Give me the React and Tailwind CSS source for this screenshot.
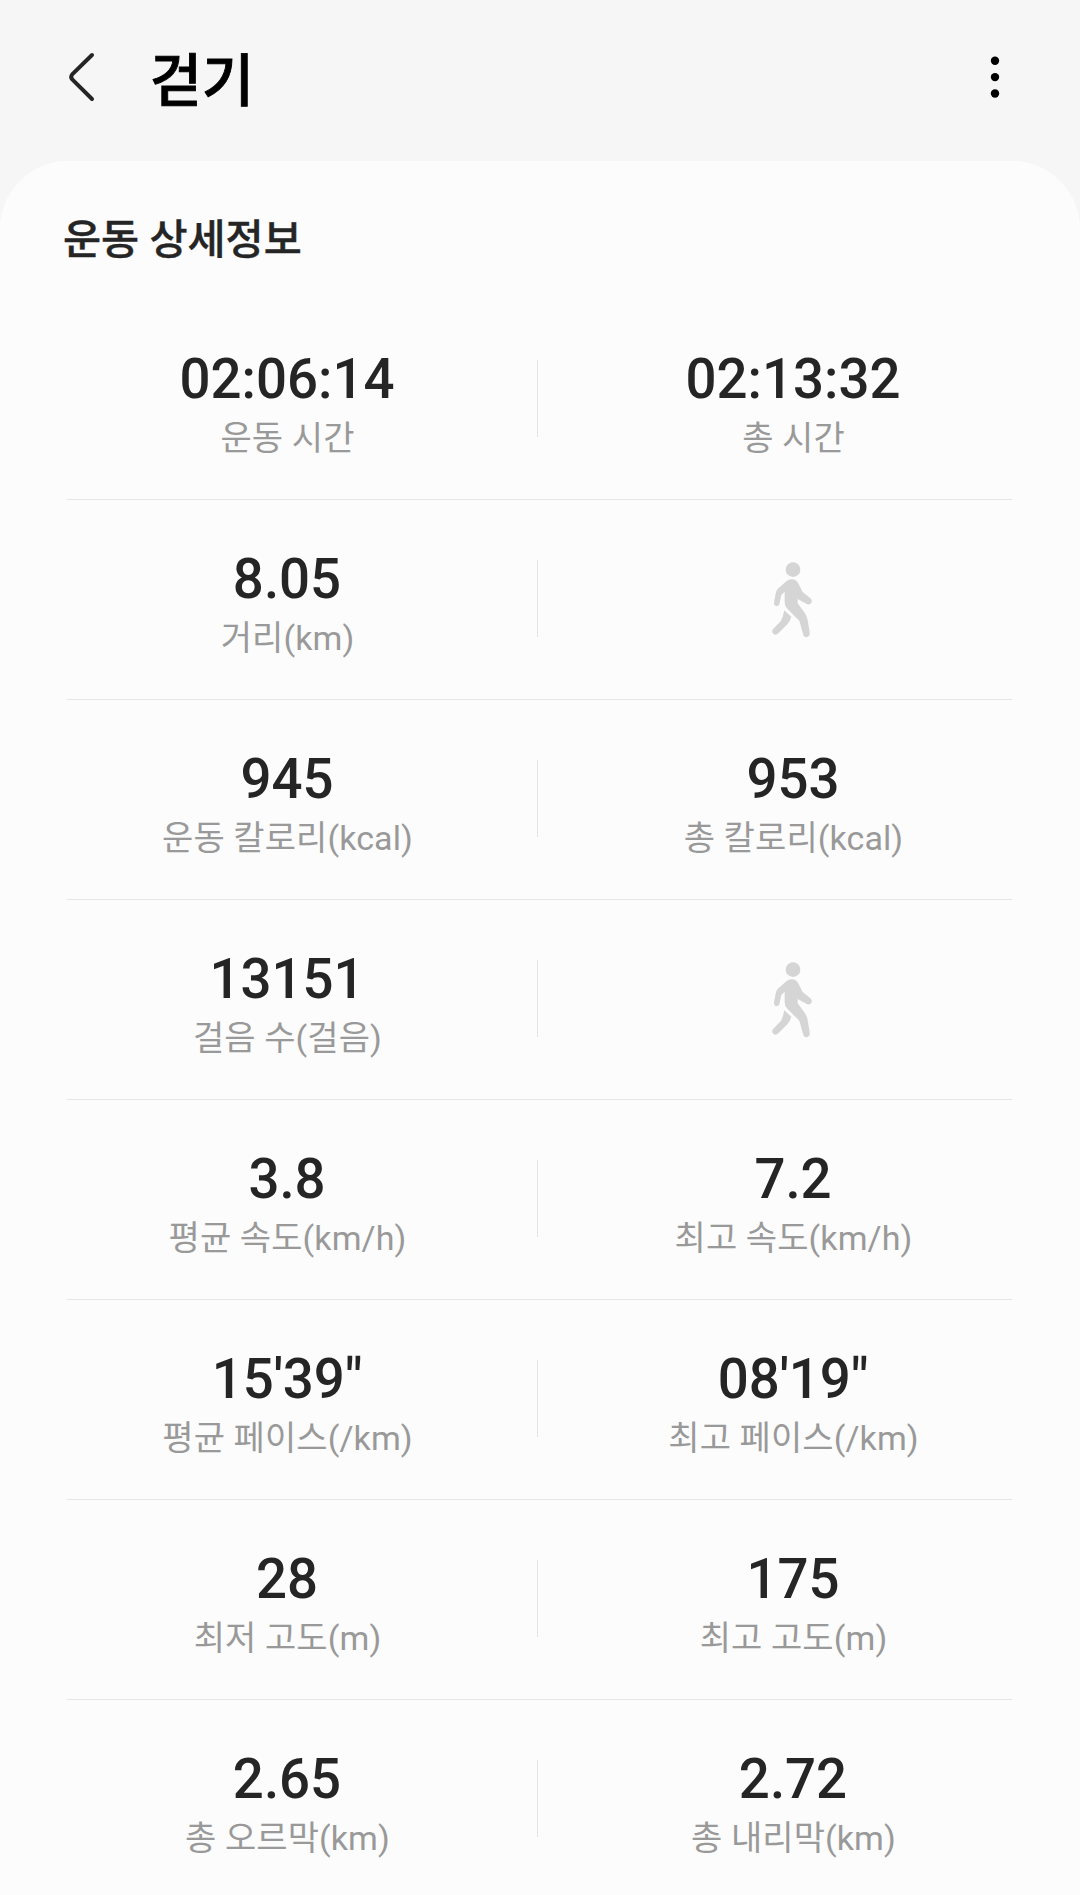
const rows = [
  [["02:06:14", "운동 시간"], ["02:13:32", "총 시간"]],
  [["8.05", "거리(km)"], null],
  [["945", "운동 칼로리(kcal)"], ["953", "총 칼로리(kcal)"]],
  [["13151", "걸음 수(걸음)"], null],
  [["3.8", "평균 속도(km/h)"], ["7.2", "최고 속도(km/h)"]],
  [["15'39\"", "평균 페이스(/km)"], ["08'19\"", "최고 페이스(/km)"]],
  [["28", "최저 고도(m)"], ["175", "최고 고도(m)"]],
  [["2.65", "총 오르막(km)"], ["2.72", "총 내리막(km)"]],
];

function WalkIcon() {
  return (
    <svg className="mt-[60px] mr-[1px] h-[80px] w-[44px]" viewBox="94 60 132 240" fill="#d5d5d5">
      <circle cx="160" cy="89" r="22" />
      <path d="M140 124 C150 115 167 116 174 127 L189 156 L212 175 C223 184 212 198 201 192 L174 177 L174 190 L196 220 Q202 229 204 240 L210 277 C213 294 192 297 190 281 L179 242 L143 206 Q134 197 135 184 L135 155 L125 165 L120 189 C117 203 101 201 103 187 L109 157 Q110 151 114 147 Z" />
      <path d="M134 211 L155 230 Q151 244 143 253 L116 280 C105 291 91 277 101 266 L123 244 Q130 232 134 211 Z" />
    </svg>
  );
}

function Stat({ data }) {
  return (
    <div className="flex flex-col items-center whitespace-nowrap">
      {data ? (
        <>
          <div className="mt-[47px] mr-[1px] h-[64px] text-[54.6px] leading-[64px] font-medium text-[#252525]">{data[0]}</div>
          <div className="mt-[7px] h-[40px] text-[34px] leading-[40px] tracking-[0.1px] text-[#999999]">{data[1]}</div>
        </>
      ) : (
        <WalkIcon />
      )}
    </div>
  );
}

export default function App() {
  return (
    <div className="h-[1895px] w-[1080px] overflow-hidden bg-[#f6f6f6] font-['Roboto','Noto_Sans_CJK_KR',sans-serif]">
      <header className="flex h-[161px] items-start pl-[64px] pr-[75.5px]">
        <svg className="mt-[47px] h-[60px] w-[36px]" viewBox="0 0 36 60" fill="none" stroke="#252525" strokeWidth="4" strokeLinecap="round" strokeLinejoin="round">
          <path d="M28 8 L8.2 27.4 Q6.2 30 8.2 32.4 L28 52" />
        </svg>
        <h1 className="mt-[42px] ml-[50px] text-[56.5px] leading-[80px] font-medium text-black [-webkit-text-stroke:0.9px_#000]">걷기</h1>
        <svg className="mt-[52px] ml-auto h-[50px] w-[20px]" viewBox="0 0 20 50">
          <circle cx="10" cy="8.7" r="4.2" />
          <circle cx="10" cy="25.1" r="4.2" />
          <circle cx="10" cy="41.5" r="4.2" />
        </svg>
      </header>
      <main className="h-[1734px] rounded-t-[68px] bg-[#fcfcfc]">
        <h2 className="h-[139px] pt-[49px] pl-[63px] text-[41.4px] leading-[60px] font-medium text-[#252525] [-webkit-text-stroke:0.4px_#252525]">운동 상세정보</h2>
        {rows.map((row, i) => (
          <section key={i} className="h-[200px]">
            <div className="grid h-[199px] grid-cols-[499px_1px_511px] pl-[38px]">
              <Stat data={row[0]} />
              <div className="mt-[60px] h-[77px] bg-[#e4e4e4]" />
              <Stat data={row[1]} />
            </div>
            <div className="mr-[68px] ml-[67px] h-px bg-[#e6e6e6]" />
          </section>
        ))}
      </main>
    </div>
  );
}
